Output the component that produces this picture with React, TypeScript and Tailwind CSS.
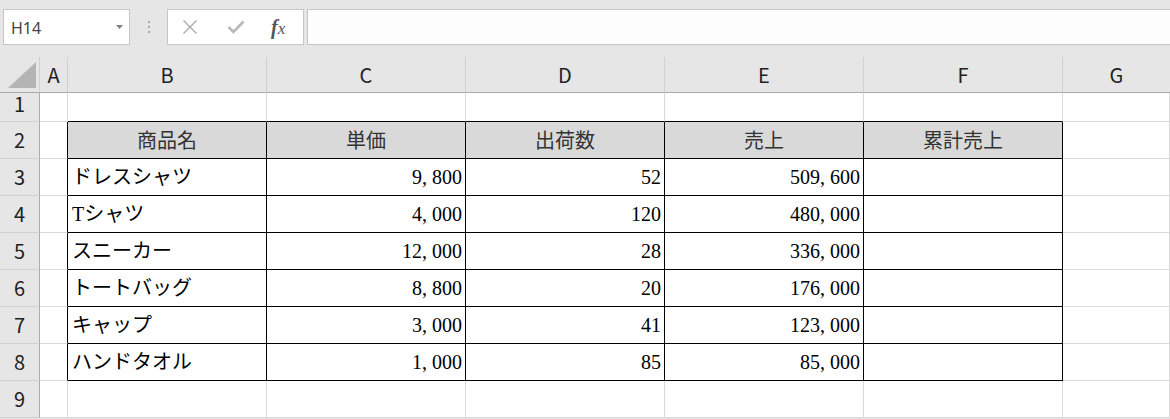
import React from "react";

type Row = { name: string; price: string; qty: string; sales: string };
const data: Row[] = [
  { name: "ドレスシャツ", price: "9,800", qty: "52", sales: "509,600" },
  { name: "Tシャツ", price: "4,000", qty: "120", sales: "480,000" },
  { name: "スニーカー", price: "12,000", qty: "28", sales: "336,000" },
  { name: "トートバッグ", price: "8,800", qty: "20", sales: "176,000" },
  { name: "キャップ", price: "3,000", qty: "41", sales: "123,000" },
  { name: "ハンドタオル", price: "1,000", qty: "85", sales: "85,000" },
];

const COLS = ["A", "B", "C", "D", "E", "F", "G"];
const HEAD = ["商品名", "単価", "出荷数", "売上", "累計売上"];

function Num({ v }: { v: string }) {
  const parts = v.split(",");
  return (
    <span>
      {parts.map((p, i) => (
        <React.Fragment key={i}>
          {i > 0 && <span className="inline-block w-[10px]">,</span>}
          {p}
        </React.Fragment>
      ))}
    </span>
  );
}

function Cell({
  rb,
  bb,
  head,
  align,
  children,
}: {
  rb: boolean;
  bb: boolean;
  head?: boolean;
  align?: "left" | "right" | "center";
  children?: React.ReactNode;
}) {
  return (
    <div
      className={
        "flex items-center border-r border-b leading-none whitespace-nowrap overflow-hidden " +
        (rb ? "border-r-black " : "border-r-[#d9d9d9] ") +
        (bb ? "border-b-black " : "border-b-[#d9d9d9] ") +
        (head
          ? "bg-[#d9d9d9] text-[#333] font-['Noto_Sans_CJK_JP',sans-serif] "
          : "bg-white text-black font-['Liberation_Serif','Noto_Sans_CJK_JP',serif] ") +
        (align === "right"
          ? "justify-end pr-[3px] "
          : align === "center"
          ? "justify-center "
          : "justify-start pl-[4px] ")
      }
    >
      {children}
    </div>
  );
}

function RowHead({ n }: { n: number }) {
  return (
    <div
      className={
        "flex items-center justify-center bg-[#e6e6e6] border-r border-r-[#ababab] border-b border-b-[#d0d0d0] text-[20px] leading-none text-[#222] " +
        (n === 1 ? "pb-[7px]" : "")
      }
    >
      {n}
    </div>
  );
}

export default function App() {
  const rows: React.ReactNode[] = [];
  for (let r = 1; r <= 9; r++) {
    const inTable = r >= 2 && r <= 8;
    rows.push(<RowHead key={"h" + r} n={r} />);
    rows.push(<Cell key={"A" + r} rb={inTable} bb={false} />);
    for (let c = 0; c < 5; c++) {
      const rb = inTable;
      const bb = r >= 1 && r <= 8;
      let content: React.ReactNode = null;
      let align: "left" | "right" | "center" = "left";
      let head = false;
      if (r === 2) {
        content = <span className="text-[20px]">{HEAD[c]}</span>;
        align = "center";
        head = true;
      } else if (r >= 3 && r <= 8) {
        const d = data[r - 3];
        if (c === 0) {
          content = <span className="text-[20px]">{d.name}</span>;
        } else if (c === 1) {
          content = <span className="text-[20px]"><Num v={d.price} /></span>;
          align = "right";
        } else if (c === 2) {
          content = <span className="text-[20px]"><Num v={d.qty} /></span>;
          align = "right";
        } else if (c === 3) {
          content = <span className="text-[20px]"><Num v={d.sales} /></span>;
          align = "right";
        }
      }
      rows.push(
        <Cell key={COLS[c + 1] + r} rb={rb} bb={bb} head={head} align={align}>
          {content}
        </Cell>
      );
    }
    rows.push(<Cell key={"G" + r} rb={false} bb={false} />);
  }

  return (
    <div className="w-[1170px] h-[419px] overflow-hidden bg-[#e6e6e6] font-['Noto_Sans_CJK_JP',sans-serif]">
      <div className="h-[57px] flex items-start pt-[9px]">
        <div className="ml-[3px] w-[127px] h-[36px] border border-[#c6c6c6] bg-white flex items-center justify-between pl-[7px] pr-[6px]">
          <span className="font-['Noto_Sans',sans-serif] text-[16px] text-[#444] leading-none pt-[2px]">H14</span>
          <svg width="7" height="4" viewBox="0 0 7 4">
            <polygon points="0,0 7,0 3.5,4" fill="#808080" />
          </svg>
        </div>
        <div className="w-[37px] h-[36px] flex flex-col items-center justify-center gap-[3px]">
          <div className="w-[2px] h-[2px] bg-[#a8a8a8]" />
          <div className="w-[2px] h-[2px] bg-[#a8a8a8]" />
          <div className="w-[2px] h-[2px] bg-[#a8a8a8]" />
        </div>
        <div className="w-[137px] h-[36px] border border-[#c6c6c6] bg-white flex items-center">
          <svg className="ml-[14px]" width="16" height="16" viewBox="0 0 16 16">
            <path d="M1.5 1.5 L14.5 14.5 M14.5 1.5 L1.5 14.5" stroke="#ababab" strokeWidth="1.4" fill="none" />
          </svg>
          <svg className="ml-[29px]" width="18" height="14" viewBox="0 0 18 14">
            <path d="M1.5 7 L6.5 12 L16.5 1.5" stroke="#b8b8b8" strokeWidth="2.6" fill="none" />
          </svg>
          <span className="ml-[26px] font-['Liberation_Serif',serif] italic font-bold text-[20px] leading-none text-[#555]">
            f<span className="text-[17px] font-normal">x</span>
          </span>
        </div>
        <div className="ml-[3px] flex-1 h-[36px] border border-r-0 border-[#c6c6c6] bg-[#fdfdfd]" />
      </div>

      <div className="grid grid-cols-[40px_28px_199px_199px_199px_199px_199px_1fr] grid-rows-[36px_29px_repeat(8,37px)]">
        <div className="relative bg-[#e6e6e6] border-r border-r-[#d0d0d0] border-b border-b-[#a8a8a8]">
          <svg className="absolute left-0 top-0" width="39" height="35" viewBox="0 0 39 35">
            <polygon points="8,31 36,5 36,31" fill="#b4b4b4" />
          </svg>
        </div>
        {COLS.map((c, i) => (
          <div
            key={c}
            className={
              "flex items-center justify-center bg-[#e6e6e6] border-b border-b-[#a8a8a8] text-[20px] leading-none text-[#222] " +
              (i < 6 ? "border-r border-r-[#d0d0d0]" : "")
            }
          >
            {c}
          </div>
        ))}
        {rows}
      </div>
    </div>
  );
}
